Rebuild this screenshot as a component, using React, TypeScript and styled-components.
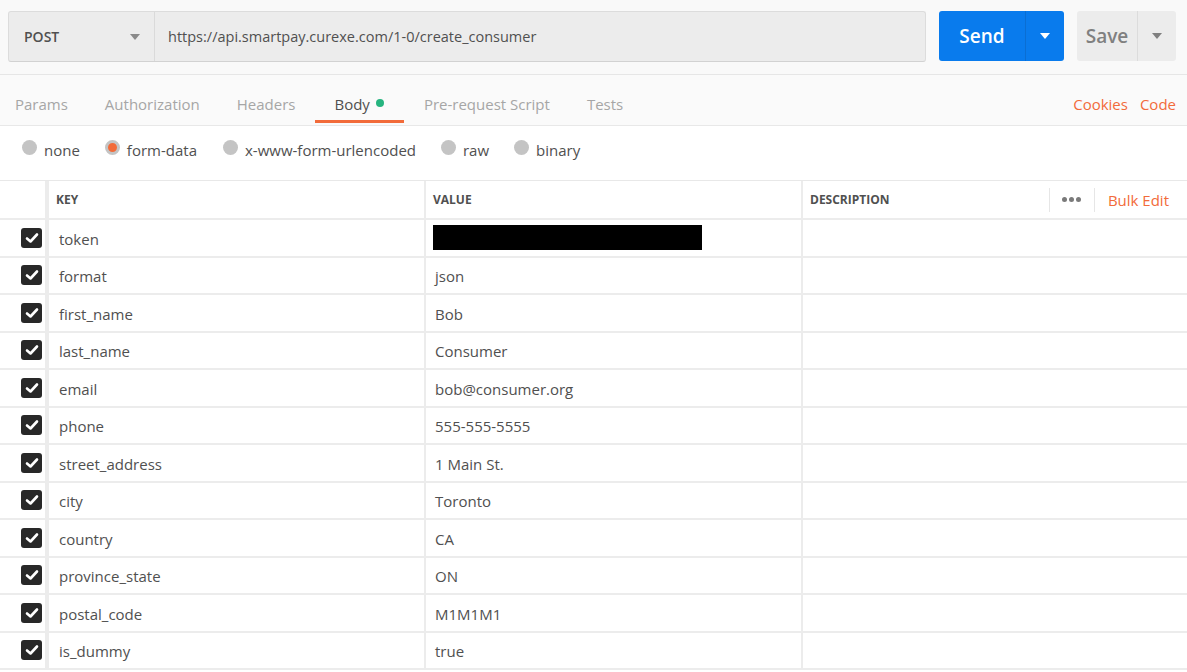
import React from "react";
import styled, { createGlobalStyle } from "styled-components";

const Global = createGlobalStyle`
  html, body { margin: 0; padding: 0; background: #ffffff; }
  body { font-family: "Open Sans", "Noto Sans", sans-serif; color: #505050; }
  * { box-sizing: border-box; }
`;

const Page = styled.div`
  width: 1187px;
  height: 672px;
  overflow: hidden;
  background: #ffffff;
`;

const TopBar = styled.div`
  height: 75px;
  background: #f9f9f9;
  border-bottom: 1px solid #e6e6e6;
  display: flex;
  align-items: flex-start;
  padding: 11px 10px 0 8px;
`;

const UrlBox = styled.div`
  width: 918px;
  height: 51px;
  display: flex;
  background: #ececec;
  border: 1px solid #dcdcdc;
  border-radius: 3px;
  border-bottom-color: #d2d2d2;
`;

const Method = styled.div`
  width: 146px;
  display: flex;
  align-items: center;
  justify-content: space-between;
  padding: 0 14px 0 15px;
  border-right: 1px solid #dadada;
  font-size: 14px;
  font-weight: 600;
  color: #505050;
`;

const Caret = styled.span<{ $color: string }>`
  width: 0;
  height: 0;
  border-left: 5px solid transparent;
  border-right: 5px solid transparent;
  border-top: 6px solid ${(p) => p.$color};
`;

const UrlText = styled.div`
  display: flex;
  align-items: center;
  padding-left: 13px;
  font-size: 14.5px;
  color: #505050;
`;

const SplitButton = styled.div<{ $bg: string; $w: number; $ml: number }>`
  display: flex;
  height: 50px;
  width: ${(p) => p.$w}px;
  margin-left: ${(p) => p.$ml}px;
  background: ${(p) => p.$bg};
  border-radius: 3px;
`;

const BtnMain = styled.div<{ $color: string; $w: number; $div: string }>`
  width: ${(p) => p.$w}px;
  display: flex;
  align-items: center;
  justify-content: center;
  font-size: 19px;
  font-weight: 600;
  color: ${(p) => p.$color};
  border-right: 1px solid ${(p) => p.$div};
`;

const BtnArrow = styled.div`
  flex: 1;
  display: flex;
  align-items: center;
  justify-content: center;
`;

const TabsRow = styled.div`
  height: 51px;
  background: #fafafa;
  border-bottom: 1px solid #e8e8e8;
  display: flex;
  align-items: stretch;
  padding: 0 0 0 15px;
`;

const Tab = styled.div<{ $active?: boolean; $ml: number }>`
  margin-left: ${(p) => p.$ml}px;
  display: flex;
  align-items: center;
  gap: 6px;
  font-size: 15px;
  color: ${(p) => (p.$active ? "#505050" : "#a6a6a6")};
  position: relative;
  padding-top: 8px;
  ${(p) =>
    p.$active &&
    `&::after { content: ""; position: absolute; left: -19px; right: -20px; bottom: 2px; height: 3px; background: #f26b3a; }`}
`;

const Dot = styled.span`
  width: 8px;
  height: 8px;
  border-radius: 50%;
  background: #26b47f;
  margin-top: -3px;
`;

const TabLinks = styled.div`
  margin-left: auto;
  display: flex;
  align-items: center;
  gap: 12px;
  padding: 8px 11px 0 0;
  font-size: 15px;
  color: #f26b3a;
`;

const RadioRow = styled.div`
  height: 55px;
  display: flex;
  align-items: center;
  padding: 0 0 6px 22px;
  border-bottom: 1px solid #e8e8e8;
`;

const RadioItem = styled.div<{ $ml: number }>`
  display: flex;
  align-items: center;
  margin-left: ${(p) => p.$ml}px;
  font-size: 15px;
  color: #505050;
`;

const RadioCircle = styled.span<{ $on?: boolean }>`
  width: 15px;
  height: 15px;
  border-radius: 50%;
  background: ${(p) => (p.$on ? "#f26b3a" : "#c4c4c4")};
  border: ${(p) => (p.$on ? "3px solid #c4c4c4" : "none")};
  margin: -5px 7px 0 0;
`;

const Table = styled.div`
  display: flex;
  flex-direction: column;
`;

const Row = styled.div<{ $h: number }>`
  display: grid;
  grid-template-columns: 45px 4px 375px 2px 375px 2px 1fr;
  height: ${(p) => p.$h}px;
  flex-shrink: 0;
  border-bottom: 2px solid #ececec;
`;

const CheckCell = styled.div`
  display: flex;
  align-items: center;
  justify-content: flex-end;
  padding-right: 3px;
`;

const Sep = styled.div<{ $c: string }>`
  background: ${(p) => p.$c};
`;

const Cell = styled.div`
  display: flex;
  align-items: center;
  padding-left: 9px;
  font-size: 15px;
  color: #505050;
  padding-top: 2px;
`;

const KeyCell = styled(Cell)`
  padding-left: 10px;
`;

const HeadCell = styled.div`
  display: flex;
  align-items: center;
  padding-left: 7px;
  font-size: 12px;
  font-weight: 700;
  color: #505050;
`;

const HeadTools = styled.div`
  display: flex;
  align-items: center;
`;

const Dots = styled.div`
  height: 24px;
  width: 46px;
  display: flex;
  align-items: center;
  justify-content: center;
  gap: 2px;
  border-left: 1px solid #e6e6e6;
  border-right: 1px solid #e6e6e6;
  margin-left: auto;
  & span {
    width: 5px;
    height: 5px;
    border-radius: 50%;
    background: #7a7a7a;
  }
`;

const BulkEdit = styled.div`
  font-size: 15px;
  color: #f26b3a;
  padding: 0 18px 0 13px;
`;

const Checkbox = styled.div`
  width: 21px;
  height: 20px;
  border-radius: 3px;
  background: #282828;
  display: flex;
  align-items: center;
  justify-content: center;
`;

const Redacted = styled.div`
  width: 269px;
  height: 25px;
  background: #000;
  margin: -3px 0 0 -2px;
`;

const rows: [string, string | null][] = [
  ["token", null],
  ["format", "json"],
  ["first_name", "Bob"],
  ["last_name", "Consumer"],
  ["email", "bob@consumer.org"],
  ["phone", "555-555-5555"],
  ["street_address", "1 Main St."],
  ["city", "Toronto"],
  ["country", "CA"],
  ["province_state", "ON"],
  ["postal_code", "M1M1M1"],
  ["is_dummy", "true"],
];

const Check = () => (
  <svg width="14" height="12" viewBox="0 0 14 12">
    <path d="M2 6.5 L5.5 9.5 L12 2.5" fill="none" stroke="#fff" strokeWidth="2.6" strokeLinecap="round" strokeLinejoin="round" />
  </svg>
);

export default function App() {
  return (
    <Page>
      <Global />
      <TopBar>
        <UrlBox>
          <Method>
            POST
            <Caret $color="#8a8a8a" />
          </Method>
          <UrlText>https://api.smartpay.curexe.com/1-0/create_consumer</UrlText>
        </UrlBox>
        <SplitButton $bg="#097bed" $w={125} $ml={13}>
          <BtnMain $color="#ffffff" $w={87} $div="#0a6ed3">Send</BtnMain>
          <BtnArrow>
            <Caret $color="#ffffff" />
          </BtnArrow>
        </SplitButton>
        <SplitButton $bg="#ececec" $w={99} $ml={13}>
          <BtnMain $color="#808080" $w={61} $div="#dcdcdc">Save</BtnMain>
          <BtnArrow>
            <Caret $color="#808080" />
          </BtnArrow>
        </SplitButton>
      </TopBar>
      <TabsRow>
        <Tab $ml={0}>Params</Tab>
        <Tab $ml={37}>Authorization</Tab>
        <Tab $ml={37}>Headers</Tab>
        <Tab $ml={39} $active>
          Body <Dot />
        </Tab>
        <Tab $ml={40}>Pre-request Script</Tab>
        <Tab $ml={37}>Tests</Tab>
        <TabLinks>
          <span>Cookies</span>
          <span>Code</span>
        </TabLinks>
      </TabsRow>
      <RadioRow>
        <RadioItem $ml={0}>
          <RadioCircle />
          none
        </RadioItem>
        <RadioItem $ml={25}>
          <RadioCircle $on />
          form-data
        </RadioItem>
        <RadioItem $ml={26}>
          <RadioCircle />
          x-www-form-urlencoded
        </RadioItem>
        <RadioItem $ml={25}>
          <RadioCircle />
          raw
        </RadioItem>
        <RadioItem $ml={25}>
          <RadioCircle />
          binary
        </RadioItem>
      </RadioRow>
      <Table>
        <Row $h={39}>
          <CheckCell />
          <Sep $c="#ececec" />
          <HeadCell>KEY</HeadCell>
          <Sep $c="#ececec" />
          <HeadCell>VALUE</HeadCell>
          <Sep $c="#ececec" />
          <HeadTools>
            <HeadCell>DESCRIPTION</HeadCell>
            <Dots>
              <span />
              <span />
              <span />
            </Dots>
            <BulkEdit>Bulk Edit</BulkEdit>
          </HeadTools>
        </Row>
        {rows.map(([k, v]) => (
          <Row key={k} $h={37.5}>
            <CheckCell>
              <Checkbox>
                <Check />
              </Checkbox>
            </CheckCell>
            <Sep $c="#ececec" />
            <KeyCell>{k}</KeyCell>
            <Sep $c="#ececec" />
            <Cell>{v === null ? <Redacted /> : v}</Cell>
            <Sep $c="#ececec" />
            <Cell />
          </Row>
        ))}
      </Table>
    </Page>
  );
}
